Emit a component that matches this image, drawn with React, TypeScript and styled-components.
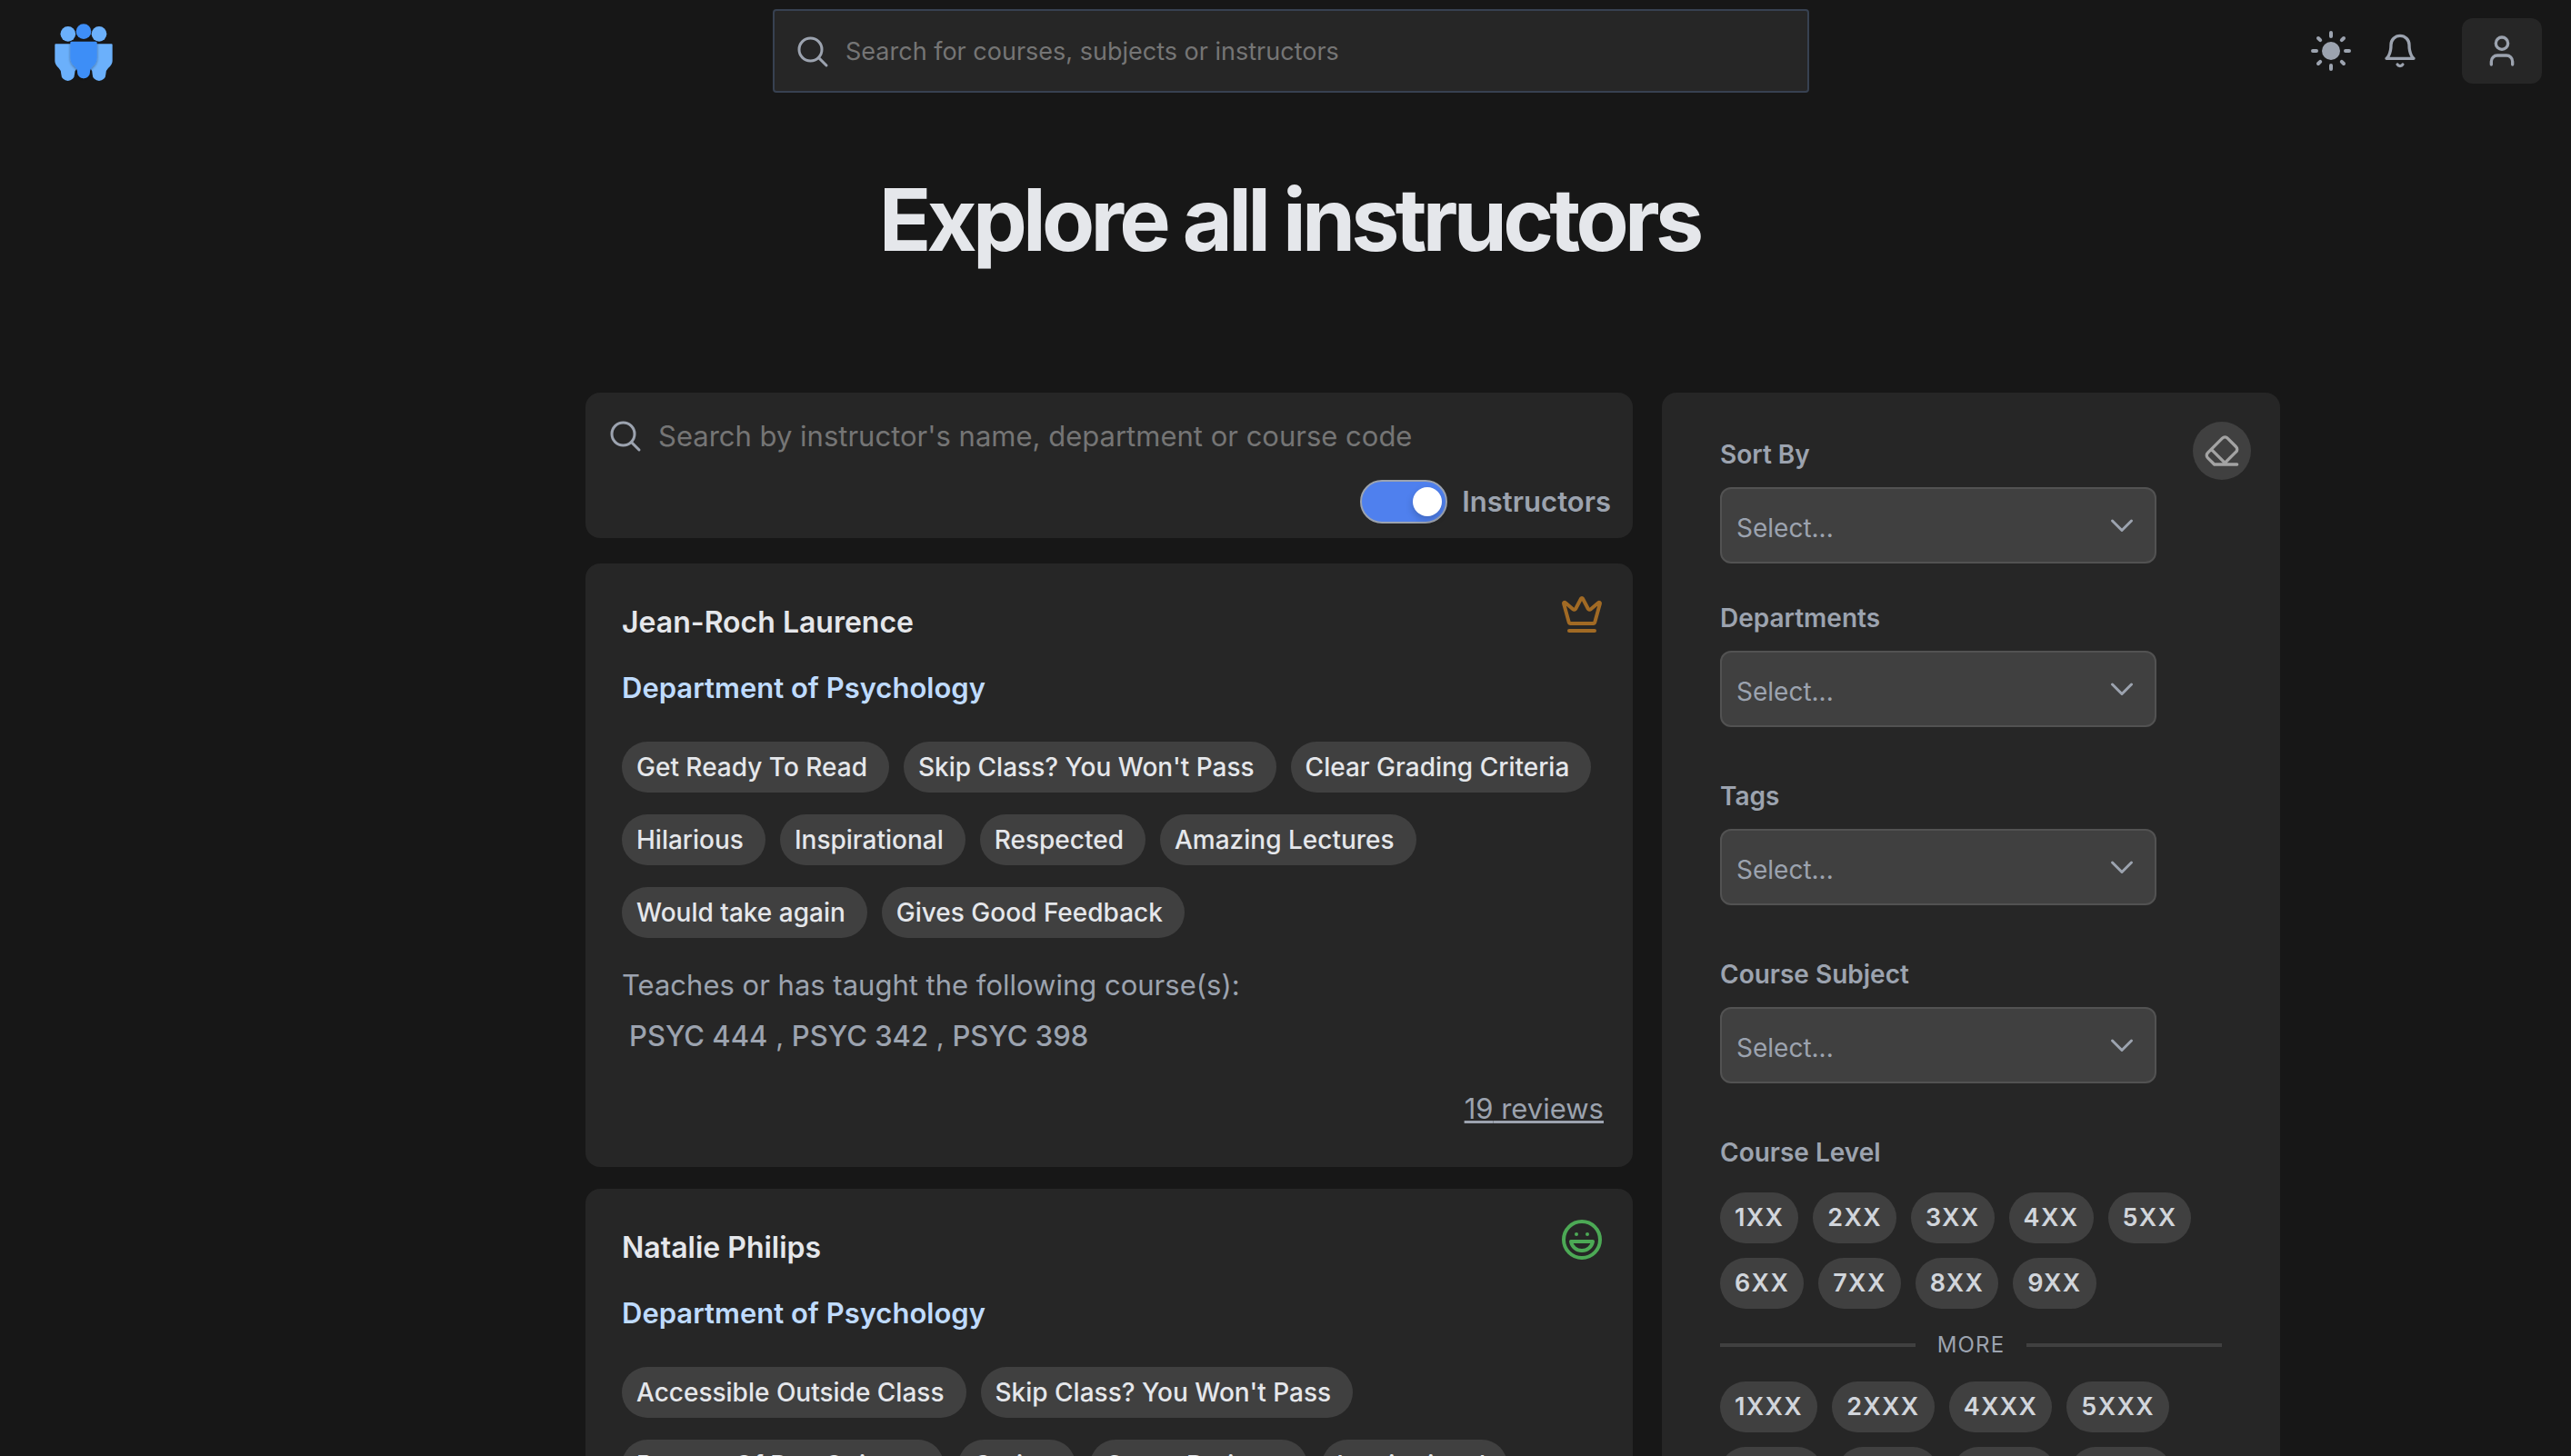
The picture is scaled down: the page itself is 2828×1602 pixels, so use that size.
import React, { useState } from 'react';
import styled, { createGlobalStyle } from 'styled-components';
import { Crown, Laugh, User } from 'lucide-react';
import { FiBell } from 'react-icons/fi';

const color = {
  page: '#171717',
  panel: '#262626',
  raised: '#404040',
  edge: '#525252',
  text: '#e5e7eb',
  soft: '#d1d5db',
  muted: '#9ca3af',
  link: '#bfdbfe',
};

const GlobalStyle = createGlobalStyle`
  *, *::before, *::after { box-sizing: border-box; }
  body {
    margin: 0;
    background: ${color.page};
    color: ${color.muted};
    font-family: Inter, "Liberation Sans", sans-serif;
  }
  button, input, select { font: inherit; color: inherit; margin: 0; }
  h1, h2, h3, p, ul, fieldset { margin: 0; padding: 0; border: 0; }
`;

const Page = styled.div`
  height: 100vh;
  overflow: hidden;
`;

const Header = styled.header`
  display: grid;
  grid-template-columns: 1fr minmax(0, 1140px) 1fr;
  align-items: center;
  height: 112px;
  padding: 0 32px 0 44px;
`;

const HomeLink = styled.a`
  display: flex;
  justify-self: start;
  margin: 4px 0 0 16px;
`;

const HeaderSearch = styled.label`
  display: flex;
  align-items: center;
  gap: 16px;
  height: 92px;
  padding: 2px 22px 0;
  border: 2px solid #374151;
  border-radius: 4px;
  background: ${color.panel};
`;

const TextInput = styled.input<{ $size: number }>`
  flex: 1;
  min-width: 0;
  height: 40px;
  padding: 0;
  border: 0;
  outline: 0;
  background: transparent;
  font-size: ${(p) => p.$size}px;
  line-height: 40px;
  &::placeholder { color: #757575; opacity: 1; }
`;

const Actions = styled.div`
  display: flex;
  align-items: center;
  justify-self: end;
  gap: 32px;
`;

const IconButton = styled.button`
  display: flex;
  padding: 0;
  border: 0;
  background: none;
`;

const UserButton = styled.button`
  display: flex;
  align-items: center;
  justify-content: center;
  width: 88px;
  height: 72px;
  margin-left: 16px;
  border: 0;
  border-radius: 12px;
  background: ${color.panel};
`;

const Title = styled.h1`
  padding: 70px 32px 0 40px;
  text-align: center;
  font-size: 95px;
  line-height: 120px;
  font-weight: 700;
  letter-spacing: -0.05em;
  color: ${color.text};
`;

const Content = styled.main`
  display: grid;
  grid-template-columns: minmax(0, 1152fr) minmax(0, 680fr);
  gap: 32px;
  align-items: start;
  max-width: 2188px;
  margin: 130px auto 0;
  padding-left: 324px;
`;

const Panel = styled.div`
  border-radius: 16px;
  background: ${color.panel};
`;

const Results = styled.div`
  display: flex;
  flex-direction: column;
  gap: 24px;
`;

const SearchPanel = styled(Panel)`
  display: flex;
  flex-direction: column;
  gap: 28px;
  margin-bottom: 4px;
  padding: 28px 24px 16px;
`;

const SearchRow = styled.label`
  display: flex;
  align-items: center;
  gap: 16px;
`;

const ToggleRow = styled.label`
  display: flex;
  align-items: center;
  align-self: flex-end;
  gap: 16px;
  font-size: 31px;
  line-height: 40px;
  font-weight: 600;
`;

const Toggle = styled.input`
  appearance: none;
  display: flex;
  align-items: center;
  width: 96px;
  height: 48px;
  padding: 0 4px;
  border: 2px solid ${color.muted};
  border-radius: 24px;
  background: ${color.raised};
  &::before {
    content: '';
    width: 32px;
    height: 32px;
    border-radius: 50%;
    background: #fff;
    box-shadow: 0 4px 8px rgba(0, 0, 0, 0.2);
  }
  &:checked {
    justify-content: flex-end;
    background: #4f80ee;
  }
`;

const Card = styled(Panel).attrs({ as: 'article' })`
  display: flex;
  flex-direction: column;
  padding: 32px 32px 44px 40px;
  font-size: 31px;
  line-height: 40px;
`;

const CardTop = styled.div<{ $tone: string }>`
  display: flex;
  justify-content: space-between;
  color: ${(p) => p.$tone};
`;

const Name = styled.h2`
  padding-top: 12px;
  font-size: 32px;
  line-height: 42px;
  font-weight: 600;
  color: ${color.text};
`;

const Department = styled.h3`
  margin-top: 30px;
  font-size: 31px;
  line-height: 42px;
  font-weight: 600;
  color: ${color.link};
`;

const Tags = styled.div`
  display: flex;
  flex-wrap: wrap;
  gap: 24px 16px;
  margin: 38px 0 32px;
`;

const Tag = styled.button`
  padding: 8px 24px 8px 16px;
  border: 0;
  border-radius: 28px;
  background: ${color.raised};
  font-size: 28px;
  line-height: 40px;
  font-weight: 500;
  color: ${color.text};
`;

const Courses = styled.p`
  margin: 16px 0 0 8px;
`;

const CourseCode = styled.span`
  font-weight: 500;
`;

const Reviews = styled.a`
  align-self: flex-end;
  margin-top: 40px;
  color: ${color.muted};
  text-decoration: underline;
`;

const Filters = styled(Panel).attrs({ as: 'aside' })`
  display: grid;
  grid-template-columns: minmax(0, 1fr) auto;
  align-items: start;
  padding: 32px 32px 64px 64px;
`;

const FilterList = styled.form`
  display: flex;
  flex-direction: column;
  grid-area: 1 / 1 / 2 / 3;
  padding: 16px 32px 0 0;
`;

const ClearButton = styled.button`
  display: flex;
  align-items: center;
  justify-content: center;
  grid-area: 1 / 2 / 2 / 3;
  width: 64px;
  height: 64px;
  padding: 0;
  border: 0;
  border-radius: 50%;
  background: ${color.raised};
  color: #a3a3a3;
`;

const Field = styled.div<{ $after: number }>`
  display: flex;
  flex-direction: column;
  gap: 16px;
  max-width: 480px;
  margin-bottom: ${(p) => p.$after}px;
`;

const FieldLabel = styled.label`
  font-size: 28px;
  line-height: 40px;
  font-weight: 600;
`;

const SelectBox = styled.div`
  display: grid;
  align-items: center;
  > * { grid-area: 1 / 1; }
  > svg {
    justify-self: end;
    margin-right: 18px;
    pointer-events: none;
  }
`;

const Select = styled.select`
  appearance: none;
  width: 100%;
  height: 84px;
  padding: 6px 72px 0 16px;
  border: 2px solid ${color.edge};
  border-radius: 12px;
  background: ${color.raised};
  font-size: 28px;
  line-height: 40px;
`;

const LevelGroup = styled.fieldset`
  display: flex;
  flex-direction: column;
  gap: 24px;
  min-width: 0;
`;

const LevelTitle = styled.legend`
  padding: 0 0 24px;
  font-size: 28px;
  line-height: 40px;
  font-weight: 600;
`;

const LevelPills = styled.div`
  display: flex;
  flex-wrap: wrap;
  gap: 16px;
`;

const LevelPill = styled.button`
  padding: 8px 16px;
  border: 0;
  border-radius: 28px;
  background: ${color.raised};
  font-size: 27px;
  line-height: 40px;
  font-weight: 600;
  letter-spacing: 0.05em;
  color: ${color.soft};
`;

const Divider = styled.div`
  display: flex;
  align-items: center;
  gap: 24px;
  font-size: 24px;
  line-height: 32px;
  letter-spacing: 0.05em;
  &::before, &::after {
    content: '';
    flex: 1;
    height: 4px;
    background: ${color.raised};
  }
`;

const Logo = () => (
  <svg width="64" height="64" viewBox="180 78 192 190" aria-hidden="true">
    <defs>
      <filter id="lift" x="-20%" y="-20%" width="140%" height="140%">
        <feDropShadow dx="0" dy="3" stdDeviation="4" floodOpacity="0.4" />
      </filter>
    </defs>
    <g fill="#6bb0fb">
      <circle cx="224.500" cy="111" r="25" />
      <circle cx="327" cy="111" r="25" />
      <path d="M184 144H252V228Q246 232 246 244A22 22 0 0 1 202 244Q202 231 194 224Q181 212 181 200V147Q181 144 184 144Z" />
      <path d="M368 144H300V228Q305 232 305 244A22 22 0 0 0 349 244Q349 231 357 224Q371 212 371 200V147Q371 144 368 144Z" />
    </g>
    <g fill="#3e8ef7">
      <circle cx="276" cy="103" r="25" />
      <path filter="url(#lift)" d="M237 136H316Q320 136 320 140V188Q320 207 308 216Q298 225 297 233V237A21 21 0 0 1 255 237V233Q254 225 244 216Q232 207 232 188V140Q232 136 237 136Z" />
    </g>
  </svg>
);

const SearchIcon = () => (
  <svg width="40" height="40" viewBox="0 0 24 24" fill="none" stroke={color.muted} strokeWidth="1.8" strokeLinecap="round" strokeLinejoin="round" aria-hidden="true">
    <path d="m21 21-5.197-5.197m0 0A7.5 7.5 0 1 0 5.196 5.196a7.5 7.5 0 0 0 10.607 10.607Z" />
  </svg>
);

const SunIcon = () => (
  <svg width="48" height="48" viewBox="0 0 24 24" fill="none" stroke="currentColor" strokeWidth="2" strokeLinecap="round" aria-hidden="true">
    <circle cx="12" cy="12" r="5" fill="currentColor" stroke="none" />
    <path d="M12 2v2M12 20v2M2 12h2M20 12h2M5 5l1.100 1.100M17.900 17.900l1.100 1.100M5 19l1.100-1.100M17.900 6.100l1.100-1.100" />
  </svg>
);

const EraserIcon = () => (
  <svg width="40" height="40" viewBox="0 0 24 24" fill="none" stroke="currentColor" strokeWidth="2" strokeLinecap="round" strokeLinejoin="round" aria-hidden="true">
    <path d="m7 21-4.300-4.300c-1-1-1-2.500 0-3.400l9.600-9.600c1-1 2.500-1 3.400 0l5.600 5.600c1 1 1 2.500 0 3.400L13 21M22 21H7M5 11l9 9" />
  </svg>
);

const ChevronIcon = () => (
  <svg width="40" height="40" viewBox="0 0 40 40" fill="none" stroke={color.muted} strokeWidth="3" strokeLinecap="round" strokeLinejoin="round" aria-hidden="true">
    <path d="M9.500 15 20 25.500 30.500 15" />
  </svg>
);

type Instructor = {
  name: string;
  department: string;
  rating: 'top' | 'good';
  tags: string[];
  courses: string[];
  reviews: number;
};

const instructors: Instructor[] = [
  {
    name: 'Jean-Roch Laurence',
    department: 'Department of Psychology',
    rating: 'top',
    tags: [
      'Get Ready To Read',
      "Skip Class? You Won't Pass",
      'Clear Grading Criteria',
      'Hilarious',
      'Inspirational',
      'Respected',
      'Amazing Lectures',
      'Would take again',
      'Gives Good Feedback',
    ],
    courses: ['PSYC 444', 'PSYC 342', 'PSYC 398'],
    reviews: 19,
  },
  {
    name: 'Natalie Philips',
    department: 'Department of Psychology',
    rating: 'good',
    tags: [
      'Accessible Outside Class',
      "Skip Class? You Won't Pass",
      'Beware Of Pop Quizzes',
      'Caring',
      'Group Projects',
      'Inspirational',
    ],
    courses: ['PSYC 310'],
    reviews: 12,
  },
];

const fields = [
  { id: 'sort', label: 'Sort By', after: 40 },
  { id: 'departments', label: 'Departments', after: 56 },
  { id: 'tags', label: 'Tags', after: 56 },
  { id: 'subject', label: 'Course Subject', after: 56 },
];

const levels = ['1XX', '2XX', '3XX', '4XX', '5XX', '6XX', '7XX', '8XX', '9XX'];
const moreLevels = ['1XXX', '2XXX', '4XXX', '5XXX', '6XXX', '7XXX', '8XXX', '9XXX'];

const InstructorCard = ({ item }: { item: Instructor }) => (
  <Card>
    <CardTop $tone={item.rating === 'top' ? '#a16a24' : '#4ca955'}>
      <Name>{item.name}</Name>
      {item.rating === 'top' ? <Crown size={48} /> : <Laugh size={48} />}
    </CardTop>
    <Department>{item.department}</Department>
    <Tags>
      {item.tags.map((tag) => (
        <Tag key={tag} type="button">{tag}</Tag>
      ))}
    </Tags>
    <p>Teaches or has taught the following course(s):</p>
    <Courses>
      {item.courses.map((code, i) => (
        <React.Fragment key={code}>
          {i > 0 && ' , '}
          <CourseCode>{code}</CourseCode>
        </React.Fragment>
      ))}
    </Courses>
    <Reviews href="#reviews">{item.reviews} reviews</Reviews>
  </Card>
);

export default function App() {
  const [byInstructor, setByInstructor] = useState(true);
  return (
    <Page>
      <GlobalStyle />
      <Header>
        <HomeLink href="#home" aria-label="Home"><Logo /></HomeLink>
        <HeaderSearch>
          <SearchIcon />
          <TextInput
            $size={27}
            type="text"
            aria-label="Search the site"
            placeholder="Search for courses, subjects or instructors"
          />
        </HeaderSearch>
        <Actions>
          <IconButton type="button" aria-label="Switch theme"><SunIcon /></IconButton>
          <IconButton type="button" aria-label="Notifications"><FiBell size={40} /></IconButton>
          <UserButton type="button" aria-label="Account"><User size={40} /></UserButton>
        </Actions>
      </Header>
      <Title>Explore all instructors</Title>
      <Content>
        <Results>
          <SearchPanel>
            <SearchRow>
              <SearchIcon />
              <TextInput
                $size={31}
                type="text"
                aria-label="Search instructors"
                placeholder="Search by instructor's name, department or course code"
              />
            </SearchRow>
            <ToggleRow>
              <Toggle
                type="checkbox"
                role="switch"
                checked={byInstructor}
                onChange={(e) => setByInstructor(e.target.checked)}
              />
              Instructors
            </ToggleRow>
          </SearchPanel>
          {instructors.map((item) => (
            <InstructorCard key={item.name} item={item} />
          ))}
        </Results>
        <Filters>
          <FilterList>
            {fields.map((field) => (
              <Field key={field.id} $after={field.after}>
                <FieldLabel htmlFor={field.id}>{field.label}</FieldLabel>
                <SelectBox>
                  <Select id={field.id}>
                    <option>Select...</option>
                  </Select>
                  <ChevronIcon />
                </SelectBox>
              </Field>
            ))}
            <LevelGroup>
              <LevelTitle>Course Level</LevelTitle>
              <LevelPills>
                {levels.map((level) => (
                  <LevelPill key={level} type="button">{level}</LevelPill>
                ))}
              </LevelPills>
              <Divider>MORE</Divider>
              <LevelPills>
                {moreLevels.map((level) => (
                  <LevelPill key={level} type="button">{level}</LevelPill>
                ))}
              </LevelPills>
            </LevelGroup>
          </FilterList>
          <ClearButton type="button" aria-label="Clear filters"><EraserIcon /></ClearButton>
        </Filters>
      </Content>
    </Page>
  );
}
